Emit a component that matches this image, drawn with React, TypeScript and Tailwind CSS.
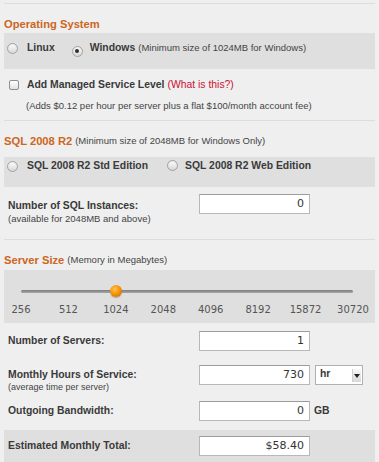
const sizes = ['256', '512', '1024', '2048', '4096', '8192', '15872', '30720'];

const Radio = ({ checked }: { checked?: boolean }) => (
  <span className="inline-flex h-[11px] w-[11px] shrink-0 items-center justify-center rounded-full border border-[#a2a2a2] bg-linear-to-b from-white to-[#d6d6d6] shadow-[inset_0_1px_1px_rgba(0,0,0,0.08)]">
    {checked && <span className="h-[4px] w-[4px] rounded-full bg-[#2e2e2e]" />}
  </span>
);

const Field = ({ value }: { value: string }) => (
  <div className="flex h-[20px] w-[111px] shrink-0 items-center justify-end border border-[#b8b8b8] border-t-[#9c9c9c] bg-white pr-[5px] font-['DejaVu_Sans',sans-serif] text-[11px] text-[#333]">
    {value}
  </div>
);

const Heading = ({ title, note }: { title: string; note?: string }) => (
  <div className="flex h-[14px] items-center whitespace-nowrap leading-[14px]">
    <span className="text-[11.2px] font-bold text-[#cc6622]">{title}</span>
    {note && <span className="ml-[3px] text-[9.5px] text-[#444]">{note}</span>}
  </div>
);

export default function App() {
  return (
    <div className="h-[462px] w-[379px] overflow-hidden bg-[#efefef] px-[4px] font-['Liberation_Sans',Arial,sans-serif] text-[#3a3a3a]">
      <div className="mt-[3px] h-px bg-[#dcdcdc]" />

      <div className="mt-[13px]">
        <Heading title="Operating System" />
      </div>
      <div className="mt-[2px] h-[36px] bg-[#dfdfdf] pl-[3px] pt-[9px]">
        <div className="flex h-[12px] items-center whitespace-nowrap">
          <Radio />
          <span className="ml-[9px] text-[10.4px] font-bold">Linux</span>
          <span className="ml-[17px]"><Radio checked /></span>
          <span className="ml-[7px] text-[10.4px] font-bold">Windows</span>
          <span className="ml-[3px] text-[9.5px] text-[#444]">(Minimum size of 1024MB for Windows)</span>
        </div>
      </div>

      <div className="mt-[10px] flex h-[12px] items-center whitespace-nowrap pl-[5px]">
        <span className="h-[10px] w-[10px] rounded-[2px] border border-[#8e8e8e] bg-linear-to-b from-white to-[#e2e2e2]" />
        <span className="ml-[8px] text-[10.4px] font-bold">Add Managed Service Level</span>
        <span className="ml-[3px] text-[10.4px] text-[#cc1133]">(What is this?)</span>
      </div>
      <div className="mt-[9px] h-[12px] whitespace-nowrap pl-[22px] text-[9.5px] leading-[12px] text-[#444]">
        (Adds $0.12 per hour per server plus a flat $100/month account fee)
      </div>

      <div className="mt-[8px] h-px bg-[#dcdcdc]" />

      <div className="mt-[13px]">
        <Heading title="SQL 2008 R2" note="(Minimum size of 2048MB for Windows Only)" />
      </div>
      <div className="mt-[9px] h-[30px] bg-[#dfdfdf] pl-[3px] pt-[3px]">
        <div className="flex h-[12px] items-center whitespace-nowrap">
          <Radio />
          <span className="ml-[9px] text-[10.4px] font-bold">SQL 2008 R2 Std Edition</span>
          <span className="ml-[19px]"><Radio /></span>
          <span className="ml-[7px] text-[10.4px] font-bold">SQL 2008 R2 Web Edition</span>
        </div>
      </div>

      <div className="mt-[7px] flex h-[45px] items-start pl-[4px]">
        <div className="w-[191px] pt-[6px]">
          <div className="h-[12px] text-[10.4px] font-bold leading-[12px]">Number of SQL Instances:</div>
          <div className="mt-px h-[12px] text-[9.5px] leading-[12px] text-[#444]">(available for 2048MB and above)</div>
        </div>
        <Field value="0" />
      </div>

      <div className="h-px bg-[#dcdcdc]" />

      <div className="mt-[13px]">
        <Heading title="Server Size" note="(Memory in Megabytes)" />
      </div>
      <div className="mt-[3px] h-[53px] bg-[#dfdfdf] pt-[15px]">
        <div className="relative ml-[17px] h-[12px] w-[332px]">
          <div className="absolute left-0 right-0 top-[5px] h-[3px] rounded-full bg-linear-to-b from-[#7c7c7c] to-[#a8a8a8]" />
          <div className="absolute left-[89px] top-0 h-[12px] w-[12px] rounded-full bg-[radial-gradient(circle_at_40%_35%,#ffc24a,#f28c00_55%,#c85f00)] shadow-[0_1px_1px_rgba(0,0,0,0.25)]" />
        </div>
        <div className="ml-[17px] mt-[7px] flex h-[12px] w-[332px] justify-between">
          {sizes.map((s) => (
            <div key={s} className="flex w-0 justify-center">
              <span className="whitespace-nowrap font-['DejaVu_Sans',sans-serif] text-[10px] leading-[12px] text-[#555]">{s}</span>
            </div>
          ))}
        </div>
      </div>

      <div className="mt-[8px] flex h-[20px] items-center pl-[4px]">
        <div className="w-[191px] text-[10.4px] font-bold">Number of Servers:</div>
        <Field value="1" />
      </div>

      <div className="mt-[14px] flex items-start pl-[4px]">
        <div className="w-[191px]">
          <div className="h-[20px] text-[10.4px] font-bold leading-[20px]">Monthly Hours of Service:</div>
          <div className="-mt-[3px] h-[10px] text-[9px] leading-[10px] text-[#444]">(average time per server)</div>
        </div>
        <Field value="730" />
        <div className="ml-[5px] flex h-[20px] w-[48px] items-start border border-[#b0b0b0] bg-white">
          <span className="ml-[4px] mt-[2px] flex-1 text-[10.4px] font-bold leading-[12px]">hr</span>
          <span className="mr-px mt-[3px] flex h-[13px] w-[9px] items-center justify-center border-l border-[#d0d0d0] bg-linear-to-b from-[#f8f8f8] to-[#d8d8d8]">
            <span className="h-0 w-0 border-x-[3px] border-t-[4px] border-x-transparent border-t-[#222]" />
          </span>
        </div>
      </div>

      <div className="mt-[9px] flex h-[20px] items-center pl-[4px]">
        <div className="w-[191px] text-[10.4px] font-bold">Outgoing Bandwidth:</div>
        <Field value="0" />
        <span className="ml-[4px] text-[10.4px] font-bold">GB</span>
      </div>

      <div className="mt-[9px] flex h-[32px] items-center bg-[#dfdfdf] pl-[4px]">
        <div className="w-[191px] text-[10.4px] font-bold">Estimated Monthly Total:</div>
        <Field value="$58.40" />
      </div>
    </div>
  );
}
